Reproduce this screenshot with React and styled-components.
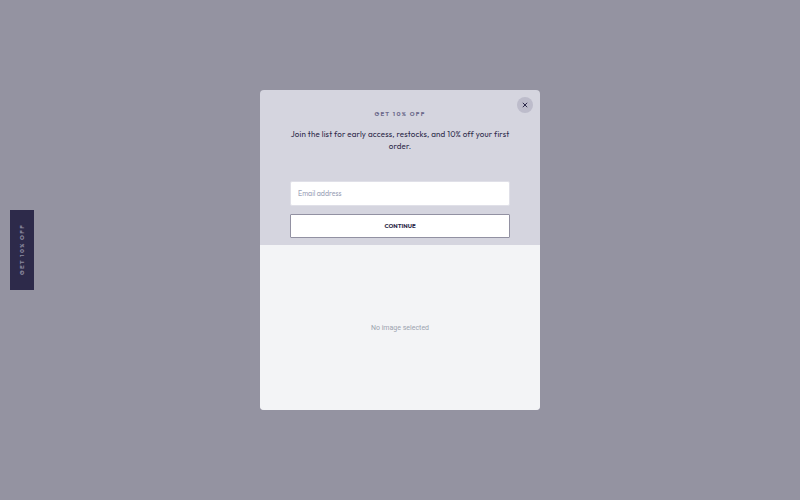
import React from "react";
import styled, { createGlobalStyle } from "styled-components";

const GlobalStyle = createGlobalStyle`
  *, *::before, *::after { box-sizing: border-box; }
  body {
    margin: 0;
    background: #9493a1;
    color: #2d2a4a;
    font-family: Outfit, Lato, sans-serif;
    font-variant-ligatures: none;
  }
`;

const Stage = styled.main`
  position: relative;
  display: flex;
  align-items: center;
  justify-content: center;
  min-height: 100vh;
  padding: 20px 44px;
`;

const Teaser = styled.button`
  position: absolute;
  left: 10px;
  top: 50%;
  transform: translateY(-50%);
  display: flex;
  align-items: center;
  justify-content: center;
  min-height: 80px;
  padding: 12px 8px;
  border: 0;
  background: #2d2a4a;
  color: #8b899f;
  font: 700 6px/8px Outfit, Lato, sans-serif;
  letter-spacing: 0.22em;
  white-space: nowrap;
  cursor: pointer;

  span {
    writing-mode: vertical-rl;
    transform: rotate(180deg);
  }
`;

const Dialog = styled.section`
  position: relative;
  width: 100%;
  max-width: 280px;
  border-radius: 4px;
  overflow: hidden;
  background: #d5d5df;
`;

const CloseButton = styled.button`
  position: absolute;
  top: 7px;
  right: 7px;
  display: grid;
  place-items: center;
  width: 16px;
  height: 16px;
  padding: 0;
  border: 0;
  border-radius: 50%;
  background: #bdbccb;
  color: #2d2a4a;
  cursor: pointer;
`;

const Offer = styled.form`
  display: flex;
  flex-direction: column;
  padding: 19px 30px 7px;
  text-align: center;
`;

const Eyebrow = styled.h2`
  margin: 0;
  color: #6d6b8c;
  font-size: 6px;
  font-weight: 700;
  line-height: 10px;
  letter-spacing: 0.22em;
`;

const Message = styled.p`
  margin: 9px 0 29px;
  font-size: 8px;
  font-weight: 400;
  line-height: 12px;
  letter-spacing: 0.02em;
`;

const EmailInput = styled.input`
  width: 100%;
  height: 25px;
  padding: 0 7px;
  border: 1px solid #e0e0e8;
  border-radius: 2px;
  background: #fff;
  color: #2d2a4a;
  font: 400 7px/10px Outfit, Lato, sans-serif;

  &::placeholder {
    color: #9ca3b8;
    opacity: 1;
  }
`;

const SubmitButton = styled.button`
  height: 24px;
  margin-top: 8px;
  border: 1px solid #9291a2;
  border-radius: 1px;
  background: #fff;
  color: #2d2a4a;
  font: 700 6px/10px Outfit, Lato, sans-serif;
  cursor: pointer;
`;

const ImagePanel = styled.div`
  display: grid;
  place-items: center;
  min-height: 165px;
  background: #f3f4f6;
  color: #9ca3af;
  font: 400 7px/10px Roboto, sans-serif;
`;

export default function App() {
  return (
    <>
      <GlobalStyle />
      <Stage>
        <Teaser type="button"><span>GET 10% OFF</span></Teaser>
        <Dialog role="dialog" aria-labelledby="offer-title">
          <Offer onSubmit={(event) => event.preventDefault()}>
            <Eyebrow id="offer-title">GET 10% OFF</Eyebrow>
            <Message>
              Join the list for early access, restocks, and 10% off your first order.
            </Message>
            <EmailInput type="email" placeholder="Email address" aria-label="Email address" />
            <SubmitButton type="submit">CONTINUE</SubmitButton>
          </Offer>
          <ImagePanel>No image selected</ImagePanel>
          <CloseButton type="button" aria-label="Close">
            <svg width="6" height="6" viewBox="0 0 6 6" fill="none" stroke="currentColor" strokeWidth="1" aria-hidden="true">
              <path d="M.8.8l4.400 4.400M5.200.8L.8 5.200" />
            </svg>
          </CloseButton>
        </Dialog>
      </Stage>
    </>
  );
}
